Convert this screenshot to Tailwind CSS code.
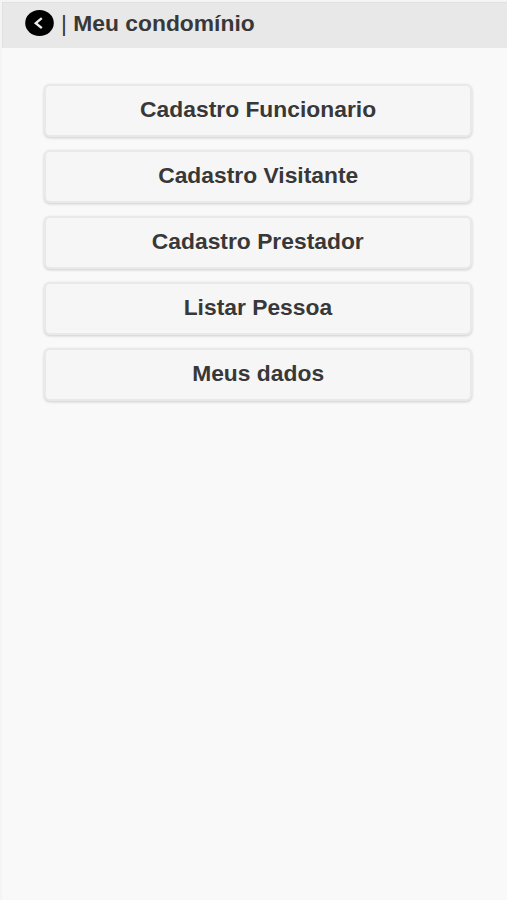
<!DOCTYPE html>
<html lang="pt-BR"><head><meta charset="utf-8"><title>Meu condomínio</title><script src="https://cdn.jsdelivr.net/npm/@tailwindcss/browser@4"></script></head>
<body class="bg-[#f9f9f9] font-['Liberation_Sans',Arial,sans-serif] text-[#383838] font-bold">
<div class="min-h-[900px] border-l-2 border-t-2 border-[#f4f4f4] overflow-hidden">
<header class="flex h-[46px] items-center border-l border-t border-[#e0e0e0] bg-[#e8e8e8] pl-[22px]">
<svg class="mb-[6px] h-[26px] w-[29px] shrink-0" viewBox="0 0 29 26"><ellipse cx="14.5" cy="13" rx="14.3" ry="13" fill="#000"/><path d="M16.8 8.2 10.8 13.2l6 5" fill="none" stroke="#eee" stroke-width="2.4"/></svg>
<h1 class="mb-[3px] ml-[6.5px] origin-left scale-x-[1.062] whitespace-nowrap text-[21.5px] leading-[26px]"><span class="font-normal">|</span> Meu condomínio</h1>
</header>
<main class="flex flex-col gap-[13px] pt-9 pl-[42px] pr-[35px]">
<button class="h-[53px] rounded-[6px] border-2 border-[#e9e9e9] bg-[#f6f6f6] pb-px text-[21.5px] shadow-[0_1px_3px_rgba(0,0,0,0.18)]"><span class="inline-block scale-x-[1.062]">Cadastro Funcionario</span></button>
<button class="h-[53px] rounded-[6px] border-2 border-[#e9e9e9] bg-[#f6f6f6] pb-px text-[21.5px] shadow-[0_1px_3px_rgba(0,0,0,0.18)]"><span class="inline-block scale-x-[1.062]">Cadastro Visitante</span></button>
<button class="h-[53px] rounded-[6px] border-2 border-[#e9e9e9] bg-[#f6f6f6] pb-px text-[21.5px] shadow-[0_1px_3px_rgba(0,0,0,0.18)]"><span class="inline-block scale-x-[1.062]">Cadastro Prestador</span></button>
<button class="h-[53px] rounded-[6px] border-2 border-[#e9e9e9] bg-[#f6f6f6] pb-px text-[21.5px] shadow-[0_1px_3px_rgba(0,0,0,0.18)]"><span class="inline-block scale-x-[1.062]">Listar Pessoa</span></button>
<button class="h-[53px] rounded-[6px] border-2 border-[#e9e9e9] bg-[#f6f6f6] pb-px text-[21.5px] shadow-[0_1px_3px_rgba(0,0,0,0.18)]"><span class="inline-block scale-x-[1.062]">Meus dados</span></button>
</main></div></body></html>
